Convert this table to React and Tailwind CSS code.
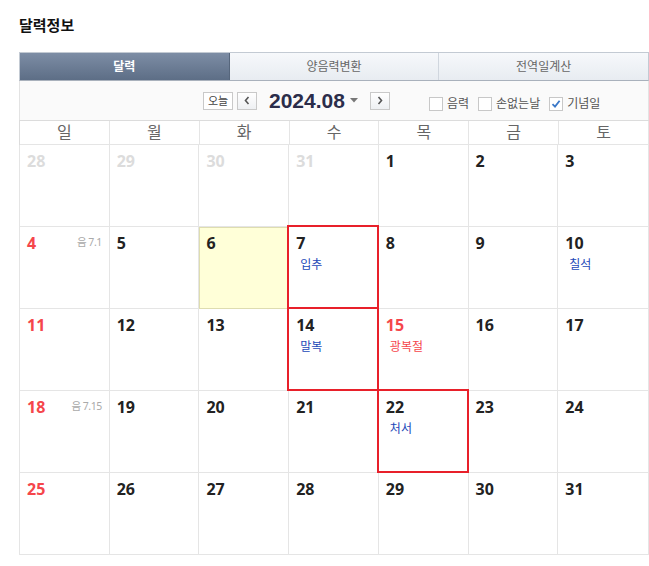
import { useState } from 'react'

const days = ["일", "월", "화", "수", "목", "금", "토"]

// one entry per cell: [day, kind, lunar, event, eventColor, marked]
const weeks = [
  [[28, "prev"], [29, "prev"], [30, "prev"], [31, "prev"], [1], [2], [3]],
  [[4, "sun", "음 7.1"], [5], [6, "today"], [7, null, null, "입추", "blue", true], [8], [9], [10, null, null, "칠석", "blue"]],
  [[11, "sun"], [12], [13], [14, null, null, "말복", "blue", true], [15, "sun", null, "광복절", "red"], [16], [17]],
  [[18, "sun", "음 7.15"], [19], [20], [21], [22, null, null, "처서", "blue", true], [23], [24]],
  [[25, "sun"], [26], [27], [28], [29], [30], [31]],
]

function Checkbox({ label, checked }){
  return (
    <label className="flex items-center gap-[4px] mr-[9px] text-[12px] text-[#555]">
      <span className="w-[14px] h-[14px] border border-[#c8c8c8] bg-white flex items-center justify-center">
        {checked && (
          <svg width="10" height="10" viewBox="0 0 10 10">
            <path d="M1.5 5.2 L4 7.6 L8.6 1.8" fill="none" stroke="#3a78c8" strokeWidth="1.8" />
          </svg>
        )}
      </span>
      {label}
    </label>
  )
}

function Cell({ cell, last }){
  const [day, kind, lunar, event, eventColor, marked] = cell
  let numColor = "text-[#222]"
  if (kind === "prev") numColor = "text-[#dcdcdc]"
  if (kind === "sun") numColor = "text-[#f5464b]"
  return (
    <div className={`relative h-[82px] border-b border-[#e5e5e5] ${last ? "" : "border-r"} ${kind === "today" ? "bg-[#ffffd8] outline outline-1 outline-[#deddb0] -outline-offset-1" : "bg-white"}`}>
      <div className="flex justify-between items-center pl-[7px] pr-[7px] pt-[4px]">
        <span className={`text-[16px] font-bold leading-[24px] ${numColor}`}>{day}</span>
        {lunar && <span className="text-[10.5px] text-[#aaa] tracking-[-0.5px]">{lunar}</span>}
      </div>
      {event && (
        <div className={`pl-[11px] pt-[2px] text-[12px] leading-[16px] ${eventColor === "red" ? "text-[#f5464b]" : "text-[#2349b8]"}`}>
          {event}
        </div>
      )}
      {marked && <div className="absolute -top-[2px] -left-[2px] -right-[1px] -bottom-[1px] border-2 border-[#e8202a] pointer-events-none"></div>}
    </div>
  )
}

export default function App(){
  const [tab, setTab] = useState("달력")
  const tabs = ["달력", "양음력변환", "전역일계산"]
  return (
    <div className="w-[649px] h-[566px] bg-white pt-[14px]" style={{ fontFamily: '"Noto Sans", "Noto Sans CJK KR", sans-serif' }}>
      <h2 className="pl-[19px] text-[15px] font-bold text-[#111] leading-[22px]">달력정보</h2>
      <div className="ml-[19px] w-[630px] mt-[16px]">
        <div className="flex h-[29px] border border-[#c3cad3] border-b-[#a9b1bc]">
          {tabs.map(t => (
            <button key={t} onClick={() => setTab(t)}
              className={`flex-1 text-[12px] leading-[27px] ${t === tab
                ? "bg-gradient-to-b from-[#7d8da5] to-[#5d6e86] text-white font-bold border-r border-[#56667c]"
                : "bg-gradient-to-b from-[#f6f8fb] to-[#e8ecf1] text-[#666] border-r border-[#d0d6de] last:border-r-0"}`}>
              {t}
            </button>
          ))}
        </div>
        <div className="flex items-center h-[39px] bg-[#fafafa] border-x border-[#e3e3e3] pl-[183px]">
          <button className="w-[30px] h-[18px] border border-[#c9c9c9] bg-white text-[11px] leading-[16px] text-[#444]">오늘</button>
          <button className="ml-[4px] w-[20px] h-[18px] border border-[#c9c9c9] bg-gradient-to-b from-white to-[#eef0f3] flex items-center justify-center">
            <svg width="8" height="9" viewBox="0 0 8 9"><path d="M5.5 1 L2.5 4.5 L5.5 8" fill="none" stroke="#555" strokeWidth="1.6" /></svg>
          </button>
          <span className="ml-[12px] text-[21px] font-bold text-[#2b2d4a] leading-[24px]" style={{ fontFamily: '"Liberation Sans", Arial, sans-serif' }}>2024.08</span>
          <svg className="ml-[5px]" width="8" height="5" viewBox="0 0 8 5"><path d="M0 0 H8 L4 4.5 Z" fill="#777" /></svg>
          <button className="ml-[12px] w-[20px] h-[18px] border border-[#c9c9c9] bg-gradient-to-b from-white to-[#eef0f3] flex items-center justify-center">
            <svg width="8" height="9" viewBox="0 0 8 9"><path d="M2.5 1 L5.5 4.5 L2.5 8" fill="none" stroke="#555" strokeWidth="1.6" /></svg>
          </button>
          <div className="flex items-center ml-[39px] mt-[7px]">
            <Checkbox label="음력" />
            <Checkbox label="손없는날" />
            <Checkbox label="기념일" checked />
          </div>
        </div>
        <div className="grid grid-cols-7 border-l border-t border-[#dcdcdc]">
          {days.map(d => (
            <div key={d} className="h-[24px] border-b border-r border-[#e5e5e5] text-center text-[16px] leading-[22px] text-[#666]">{d}</div>
          ))}
        </div>
        <div className="grid grid-cols-7 border-l border-r border-[#e5e5e5]">
          {weeks.flat().map((c, i) => (
            <Cell key={i} cell={c} last={i % 7 === 6} />
          ))}
        </div>
      </div>
    </div>
  )
}
